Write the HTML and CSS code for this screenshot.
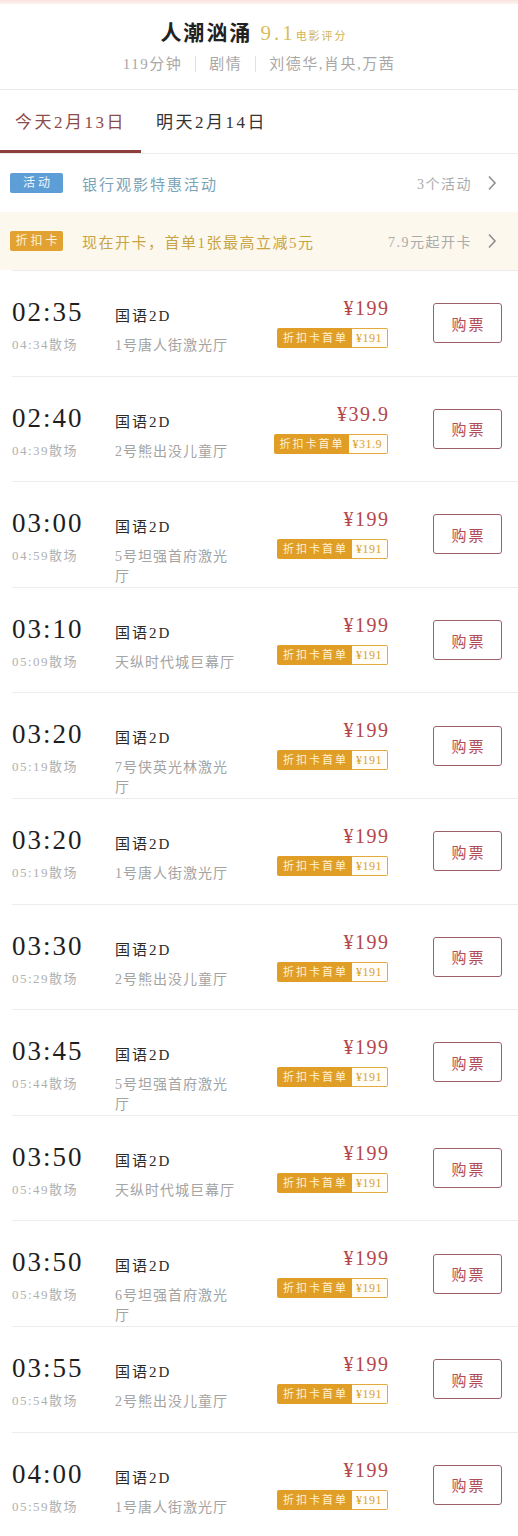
FILE: index.html
```html
<!DOCTYPE html>
<html lang="zh-CN">
<head>
<meta charset="utf-8">
<title>人潮汹涌 - 选座购票</title>
<link rel="stylesheet" href="styles.css">
</head>
<body>
<div class="page">
  <div class="topband"></div>
  <header class="movie">
    <div class="title-line">
      <span class="title">人潮汹涌</span><span class="score">9.1</span><span class="score-label">电影评分</span>
    </div>
    <div class="meta">119分钟<i class="sep"></i>剧情<i class="sep"></i>刘德华,肖央,万茜</div>
  </header>

  <nav class="tabs">
    <div class="tab active">今天2月13日</div>
    <div class="tab">明天2月14日</div>
  </nav>

  <div class="promo promo-activity">
    <span class="badge badge-blue">活动</span>
    <span class="promo-text">银行观影特惠活动</span>
    <span class="promo-right">3个活动</span>
    <svg class="chev" width="10" height="16" viewBox="0 0 10 16"><polyline points="2,1.5 8,8 2,14.5" fill="none" stroke="#8f8f8f" stroke-width="1.6"/></svg>
  </div>
  <div class="promo promo-card">
    <span class="badge badge-orange">折扣卡</span>
    <span class="promo-text gold">现在开卡，首单1张最高立减5元</span>
    <span class="promo-right">7.9元起开卡</span>
    <svg class="chev" width="10" height="16" viewBox="0 0 10 16"><polyline points="2,1.5 8,8 2,14.5" fill="none" stroke="#8f8f8f" stroke-width="1.6"/></svg>
  </div>

  <ul class="shows">
    <li class="show">
      <div class="c-time"><div class="time">02:35</div><div class="end">04:34散场</div></div>
      <div class="c-info"><div class="lang">国语2D</div><div class="hall">1号唐人街激光厅</div></div>
      <div class="c-price"><div class="price">¥199</div><div class="disc"><span class="disc-l">折扣卡首单</span><span class="disc-r">¥191</span></div></div>
      <button class="buy">购票</button>
    </li>
    <li class="show">
      <div class="c-time"><div class="time">02:40</div><div class="end">04:39散场</div></div>
      <div class="c-info"><div class="lang">国语2D</div><div class="hall">2号熊出没儿童厅</div></div>
      <div class="c-price"><div class="price">¥39.9</div><div class="disc"><span class="disc-l">折扣卡首单</span><span class="disc-r">¥31.9</span></div></div>
      <button class="buy">购票</button>
    </li>
    <li class="show">
      <div class="c-time"><div class="time">03:00</div><div class="end">04:59散场</div></div>
      <div class="c-info"><div class="lang">国语2D</div><div class="hall">5号坦强首府激光厅</div></div>
      <div class="c-price"><div class="price">¥199</div><div class="disc"><span class="disc-l">折扣卡首单</span><span class="disc-r">¥191</span></div></div>
      <button class="buy">购票</button>
    </li>
    <li class="show">
      <div class="c-time"><div class="time">03:10</div><div class="end">05:09散场</div></div>
      <div class="c-info"><div class="lang">国语2D</div><div class="hall">天纵时代城巨幕厅</div></div>
      <div class="c-price"><div class="price">¥199</div><div class="disc"><span class="disc-l">折扣卡首单</span><span class="disc-r">¥191</span></div></div>
      <button class="buy">购票</button>
    </li>
    <li class="show">
      <div class="c-time"><div class="time">03:20</div><div class="end">05:19散场</div></div>
      <div class="c-info"><div class="lang">国语2D</div><div class="hall">7号侠英光林激光厅</div></div>
      <div class="c-price"><div class="price">¥199</div><div class="disc"><span class="disc-l">折扣卡首单</span><span class="disc-r">¥191</span></div></div>
      <button class="buy">购票</button>
    </li>
    <li class="show">
      <div class="c-time"><div class="time">03:20</div><div class="end">05:19散场</div></div>
      <div class="c-info"><div class="lang">国语2D</div><div class="hall">1号唐人街激光厅</div></div>
      <div class="c-price"><div class="price">¥199</div><div class="disc"><span class="disc-l">折扣卡首单</span><span class="disc-r">¥191</span></div></div>
      <button class="buy">购票</button>
    </li>
    <li class="show">
      <div class="c-time"><div class="time">03:30</div><div class="end">05:29散场</div></div>
      <div class="c-info"><div class="lang">国语2D</div><div class="hall">2号熊出没儿童厅</div></div>
      <div class="c-price"><div class="price">¥199</div><div class="disc"><span class="disc-l">折扣卡首单</span><span class="disc-r">¥191</span></div></div>
      <button class="buy">购票</button>
    </li>
    <li class="show">
      <div class="c-time"><div class="time">03:45</div><div class="end">05:44散场</div></div>
      <div class="c-info"><div class="lang">国语2D</div><div class="hall">5号坦强首府激光厅</div></div>
      <div class="c-price"><div class="price">¥199</div><div class="disc"><span class="disc-l">折扣卡首单</span><span class="disc-r">¥191</span></div></div>
      <button class="buy">购票</button>
    </li>
    <li class="show">
      <div class="c-time"><div class="time">03:50</div><div class="end">05:49散场</div></div>
      <div class="c-info"><div class="lang">国语2D</div><div class="hall">天纵时代城巨幕厅</div></div>
      <div class="c-price"><div class="price">¥199</div><div class="disc"><span class="disc-l">折扣卡首单</span><span class="disc-r">¥191</span></div></div>
      <button class="buy">购票</button>
    </li>
    <li class="show">
      <div class="c-time"><div class="time">03:50</div><div class="end">05:49散场</div></div>
      <div class="c-info"><div class="lang">国语2D</div><div class="hall">6号坦强首府激光厅</div></div>
      <div class="c-price"><div class="price">¥199</div><div class="disc"><span class="disc-l">折扣卡首单</span><span class="disc-r">¥191</span></div></div>
      <button class="buy">购票</button>
    </li>
    <li class="show">
      <div class="c-time"><div class="time">03:55</div><div class="end">05:54散场</div></div>
      <div class="c-info"><div class="lang">国语2D</div><div class="hall">2号熊出没儿童厅</div></div>
      <div class="c-price"><div class="price">¥199</div><div class="disc"><span class="disc-l">折扣卡首单</span><span class="disc-r">¥191</span></div></div>
      <button class="buy">购票</button>
    </li>
    <li class="show">
      <div class="c-time"><div class="time">04:00</div><div class="end">05:59散场</div></div>
      <div class="c-info"><div class="lang">国语2D</div><div class="hall">1号唐人街激光厅</div></div>
      <div class="c-price"><div class="price">¥199</div><div class="disc"><span class="disc-l">折扣卡首单</span><span class="disc-r">¥191</span></div></div>
      <button class="buy">购票</button>
    </li>
  </ul>
</div>
</body>
</html>
```

FILE: styles.css
```css
* { box-sizing: border-box; }
html, body { margin: 0; padding: 0; background: #fff; }
body {
  font-family: "Liberation Serif", "Noto Sans CJK SC", serif;
  color: #333;
  width: 518px;
  overflow: hidden;
}
.page { width: 518px; }

.topband {
  height: 4px;
  background: linear-gradient(180deg, #f9e3de 0%, #fdf3f1 100%);
}

/* movie header */
.movie {
  height: 86px;
  padding-top: 15px;
  border-bottom: 1px solid #ebebeb;
  text-align: center;
}
.title-line {
  height: 28px;
  line-height: 28px;
  white-space: nowrap;
  padding-right: 10px;
}
.title {
  font-size: 21px;
  font-weight: bold;
  letter-spacing: 2px;
  color: #222;
}
.score {
  font-size: 21px;
  color: #d7bd5a;
  letter-spacing: 3px;
  margin-left: 8px;
}
.score-label {
  font-size: 11px;
  color: #cfb352;
  letter-spacing: 2px;
}
.meta {
  margin-top: 7px;
  line-height: 20px;
  font-size: 15px;
  letter-spacing: 1.5px;
  color: #a8a8a8;
}
.sep {
  display: inline-block;
  width: 1px;
  height: 16px;
  background: #e2e2e2;
  margin: 0 13px;
  vertical-align: -3px;
}

/* tabs */
.tabs {
  display: flex;
  border-bottom: 1px solid #ececec;
}
.tab {
  padding: 6px 15px 0;
  line-height: 54px;
  font-size: 17px;
  letter-spacing: 2.5px;
  color: #333;
  border-bottom: 3px solid transparent;
}
.tab.active {
  color: #8a4c4c;
  border-bottom-color: #8e3d3d;
}

/* promo rows */
.promo {
  display: flex;
  align-items: center;
  height: 58px;
  padding: 0 21px 0 10px;
}
.promo-card {
  background: #fcf8ee;
}
.badge {
  width: 53px;
  height: 20px;
  line-height: 20px;
  border-radius: 2px;
  font-size: 12px;
  letter-spacing: 3px;
  text-indent: 3px;
  text-align: center;
  color: #eef6fc;
}
.badge-blue { background: #5d9ed6; }
.badge-orange { background: #e2a231; color: #fdf1d8; }
.promo-text {
  margin-left: 19px;
  font-size: 15px;
  letter-spacing: 2px;
  color: #7aa3b8;
  flex: 1;
}
.promo-text.gold { color: #c9a443; letter-spacing: 1.5px; }
.promo-right {
  font-size: 14px;
  letter-spacing: 1.5px;
  color: #ababab;
}
.chev {
  margin-left: 15px;
  display: block;
}

/* show list */
.shows {
  list-style: none;
  margin: 0 0 0 12px;
  padding: 0;
  border-top: 1px solid #ececec;
}
.show {
  display: flex;
  align-items: flex-start;
  height: 105.6px;
  padding-right: 16px;
  border-bottom: 1px solid #ececec;
}
.c-time {
  width: 103px;
  padding-top: 25px;
}
.time {
  font-size: 27px;
  line-height: 32px;
  letter-spacing: 2px;
  color: #1e1e1e;
}
.end {
  margin-top: 8px;
  font-size: 13px;
  line-height: 17px;
  letter-spacing: 1.5px;
  color: #b0b0b0;
}
.c-info {
  width: 124px;
  padding-top: 35px;
}
.lang {
  font-size: 15px;
  line-height: 20px;
  letter-spacing: 2px;
  color: #2a2a2a;
}
.hall {
  margin-top: 10px;
  font-size: 14px;
  line-height: 20px;
  letter-spacing: 1px;
  color: #a3a3a3;
}
.c-price {
  flex: 1;
  padding-top: 25px;
  margin-right: 45px;
  display: flex;
  flex-direction: column;
  align-items: flex-end;
}
.price {
  font-size: 20px;
  line-height: 24px;
  letter-spacing: 1.5px;
  margin-right: -1.5px;
  color: #b5474b;
}
.disc {
  margin-top: 8px;
  display: flex;
  height: 20px;
  line-height: 18px;
  white-space: nowrap;
}
.disc-l {
  background: #e09e26;
  color: #fff1d4;
  font-size: 11px;
  letter-spacing: 2px;
  padding: 1px 4px 1px 6px;
  border-radius: 2px 0 0 2px;
}
.disc-r {
  border: 1px solid #e3aa3c;
  border-left: none;
  border-radius: 0 2px 2px 0;
  background: #fffdf6;
  color: #d9a232;
  font-size: 12px;
  letter-spacing: 0.5px;
  padding: 0 5px 0 4px;
}
.buy {
  align-self: center;
  width: 69px;
  height: 40px;
  padding: 0;
  background: #fff;
  border: 1px solid #9d6165;
  border-radius: 3px;
  font-family: "Liberation Serif", "Noto Sans CJK SC", serif;
  font-size: 15px;
  letter-spacing: 2px;
  text-indent: 2px;
  color: #b14b57;
}
```
